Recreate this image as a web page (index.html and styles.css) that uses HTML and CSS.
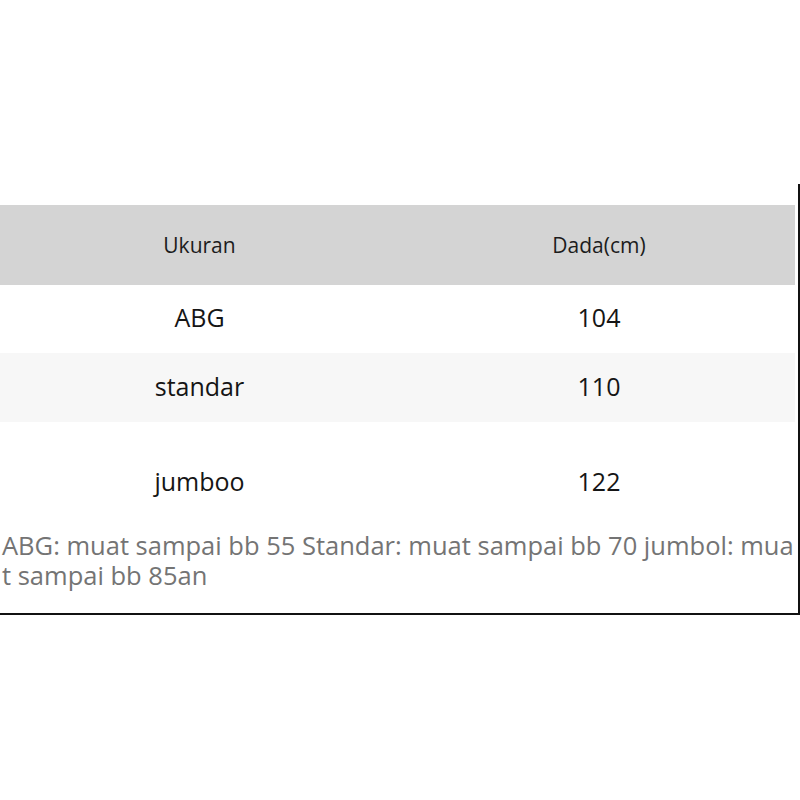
FILE: index.html
```html
<!DOCTYPE html>
<html lang="id">
<head>
<meta charset="utf-8">
<title>Ukuran</title>
<link rel="stylesheet" href="styles.css">
</head>
<body>
<div class="frame">
  <div class="table">
    <div class="row head">
      <div class="cell c1">Ukuran</div>
      <div class="cell c2">Dada(cm)</div>
    </div>
    <div class="row r1">
      <div class="cell c1">ABG</div>
      <div class="cell c2">104</div>
    </div>
    <div class="row r2">
      <div class="cell c1">standar</div>
      <div class="cell c2">110</div>
    </div>
    <div class="row r3">
      <div class="cell c1">jumboo</div>
      <div class="cell c2">122</div>
    </div>
  </div>
  <p class="note">ABG: muat sampai bb 55 Standar: muat sampai bb 70 jumbol: muat sampai bb 85an</p>
</div>
</body>
</html>
```

FILE: styles.css
```css
html, body {
  margin: 0;
  padding: 0;
  background: #ffffff;
}
body {
  font-family: "Open Sans", "Noto Sans", sans-serif;
  color: #151515;
  width: 800px;
  height: 800px;
  overflow: hidden;
}
.frame {
  margin-top: 184px;
  width: 800px;
  box-sizing: border-box;
  border-right: 2px solid #111;
  border-bottom: 2px solid #111;
  padding-top: 21px;
  padding-bottom: 23px;
}
.table {
  width: 795px;
}
.row {
  display: grid;
  grid-template-columns: 399px 396px;
  align-items: center;
  box-sizing: border-box;
}
.cell {
  text-align: center;
  font-size: 25px;
  line-height: 34px;
}
.c2 {
  padding-left: 4px;
}
.head {
  height: 80px;
  background: #d4d4d4;
}
.head .cell {
  font-size: 21px;
  line-height: 29px;
  color: #1c1c1c;
}
.r1 {
  height: 68px;
  padding-bottom: 4px;
}
.r2 {
  height: 69px;
  padding-bottom: 4px;
  background: #f7f7f7;
}
.r3 {
  height: 108px;
  padding-top: 42px;
  align-items: start;
}
.note {
  margin: 0;
  padding-left: 2px;
  font-size: 25.5px;
  line-height: 30px;
  color: #747474;
  word-break: break-all;
}
```
